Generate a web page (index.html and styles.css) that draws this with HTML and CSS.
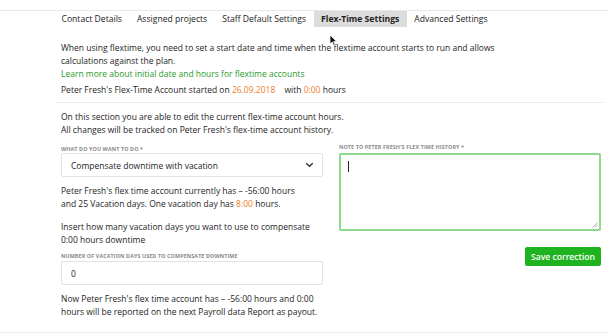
FILE: index.html
```html
<!DOCTYPE html>
<html lang="en">

<head>
    <meta charset="UTF-8">
    <title>Flex-Time Settings</title>
    <link rel="stylesheet" href="styles.css">
</head>

<body>
    <!-- Tabs -->
    <div class="tabs">
        <span class="tab">Contact Details</span>
        <span class="tab">Assigned projects</span>
        <span class="tab">Staff Default Settings</span>
        <span class="tab active">Flex-Time Settings</span>
        <span class="tab">Advanced Settings</span>
    </div>

    <div class="content">
        <p class="intro">When using flextime, you need to set a start date and time when the flextime account starts to run and allows calculations against the plan.<br>
            <a href="#" class="link">Learn more about initial date and hours for flextime accounts</a></p>

        <p class="started">Peter Fresh's Flex-Time Account started on <span class="orange">26.09.2018</span> <span class="with">with <span class="orange">0:00</span> hours</span></p>

        <div class="divider"></div>

        <p class="info">On this section you are able to edit the current flex-time account hours.<br>
            All changes will be tracked on Peter Fresh's flex-time account history.</p>

        <div class="columns">
            <div class="col">
                <div class="label">What do you want to do *</div>
                <div class="select">
                    <span>Compensate downtime with vacation</span>
                    <svg width="9" height="6" viewBox="0 0 9 6"><path d="M1.2 1.2 L4.5 4.3 L7.8 1.2" fill="none" stroke="#333" stroke-width="1.4"/></svg>
                </div>

                <p class="note">Peter Fresh's flex time account currently has – -56:00 hours<br>
                    and 25 Vacation days. One vacation day has <span class="orange">8:00</span> hours.</p>

                <p class="note">Insert how many vacation days you want to use to compensate<br>
                    0:00 hours downtime</p>

                <div class="label">Number of vacation days used to compensate downtime</div>
                <div class="input">0</div>

                <p class="note">Now Peter Fresh's flex time account has – -56:00 hours and 0:00<br>
                    hours will be reported on the next Payroll data Report as payout.</p>
            </div>

            <div class="col">
                <div class="label note-label">Note to Peter Fresh's flex time history *</div>
                <div class="textarea">
                    <span class="caret"></span>
                    <svg class="grip" width="6" height="6" viewBox="0 0 6 6"><path d="M0.5 5.5 L5.5 0.5 M3 5.5 L5.5 3" stroke="#999" stroke-width="0.8"/></svg>
                </div>
                <div class="actions">
                    <button class="btn">Save correction</button>
                </div>
            </div>
        </div>
    </div>

    <div class="bottom-line"></div>

    <!-- mouse pointer -->
    <svg class="pointer" width="9" height="13" viewBox="0 0 9 13"><path d="M1 1 L1 10 L3.2 8 L4.8 11.6 L6.2 11 L4.7 7.5 L7.6 7.4 Z" fill="#111" stroke="#fff" stroke-width="0.8"/></svg>
</body>

</html>
```

FILE: styles.css
```css
body {
    margin: 0;
    padding-top: 10px;
    font-family: "Open Sans", Arial, sans-serif;
    font-size: 8.5px;
    line-height: 13px;
    color: #1e1e1e;
    background: #fff;
    position: relative;
    width: 611px;
    height: 335px;
    overflow: hidden;
}

.tabs {
    border-top: 1px solid #e8e8e8;
    margin-right: 3px;
    padding-left: 54px;
    display: flex;
    height: 16px;
}

.tab {
    padding: 0 7.5px;
    line-height: 16px;
    font-size: 8.6px;
    color: #222;
}

.tab.active {
    background: #dcdcdc;
    font-weight: bold;
}

.content {
    margin-left: 61px;
    width: 540px;
}

p {
    margin: 0;
}

.intro {
    margin-top: 14px;
    width: 455px;
}

.link {
    color: #2a9a2a;
    text-decoration: none;
}

.orange {
    color: #f07c2c;
}

.started {
    margin-top: 3px;
}

.with {
    margin-left: 7px;
}

.divider {
    border-top: 1px solid #ececec;
    margin: 6px -3px 7px -6px;
}

.columns {
    display: flex;
    gap: 16px;
    margin-top: 9px;
}

.col {
    width: 262px;
}

.label {
    font-size: 5.4px;
    line-height: 8px;
    font-weight: bold;
    text-transform: uppercase;
    color: #8a8a8a;
    letter-spacing: 0.1px;
}

.note-label {
    margin-top: -2px;
    margin-bottom: 2px;
}

.select,
.input {
    height: 22px;
    border: 1px solid #e2e2e2;
    border-radius: 2px;
    display: flex;
    align-items: center;
    justify-content: space-between;
    padding: 0 8px 0 9px;
}

.note {
    margin-top: 7px;
}

.note + .note {
    margin-top: 10px;
}

.note + .label {
    margin-top: 6px;
}

.label + .input {
    margin-top: 1px;
}

.input + .note {
    margin-top: 7px;
}

.textarea {
    height: 74px;
    border: 2px solid #8ed98e;
    border-radius: 2px;
    position: relative;
}

.caret {
    position: absolute;
    left: 7px;
    top: 6px;
    width: 1px;
    height: 11px;
    background: #222;
}

.grip {
    position: absolute;
    right: 1px;
    bottom: 1px;
}

.actions {
    display: flex;
    justify-content: flex-end;
    margin-top: 16px;
}

.btn {
    background: #1fb41f;
    color: #fff;
    border: none;
    border-radius: 2px;
    font-family: "Open Sans", Arial, sans-serif;
    font-size: 8.6px;
    font-weight: 600;
    height: 19px;
    width: 76px;
    padding: 0;
}

.bottom-line {
    position: absolute;
    left: 0;
    right: 3px;
    top: 332px;
    border-top: 1px solid #ececec;
}

.pointer {
    position: absolute;
    left: 329px;
    top: 34px;
}
```
